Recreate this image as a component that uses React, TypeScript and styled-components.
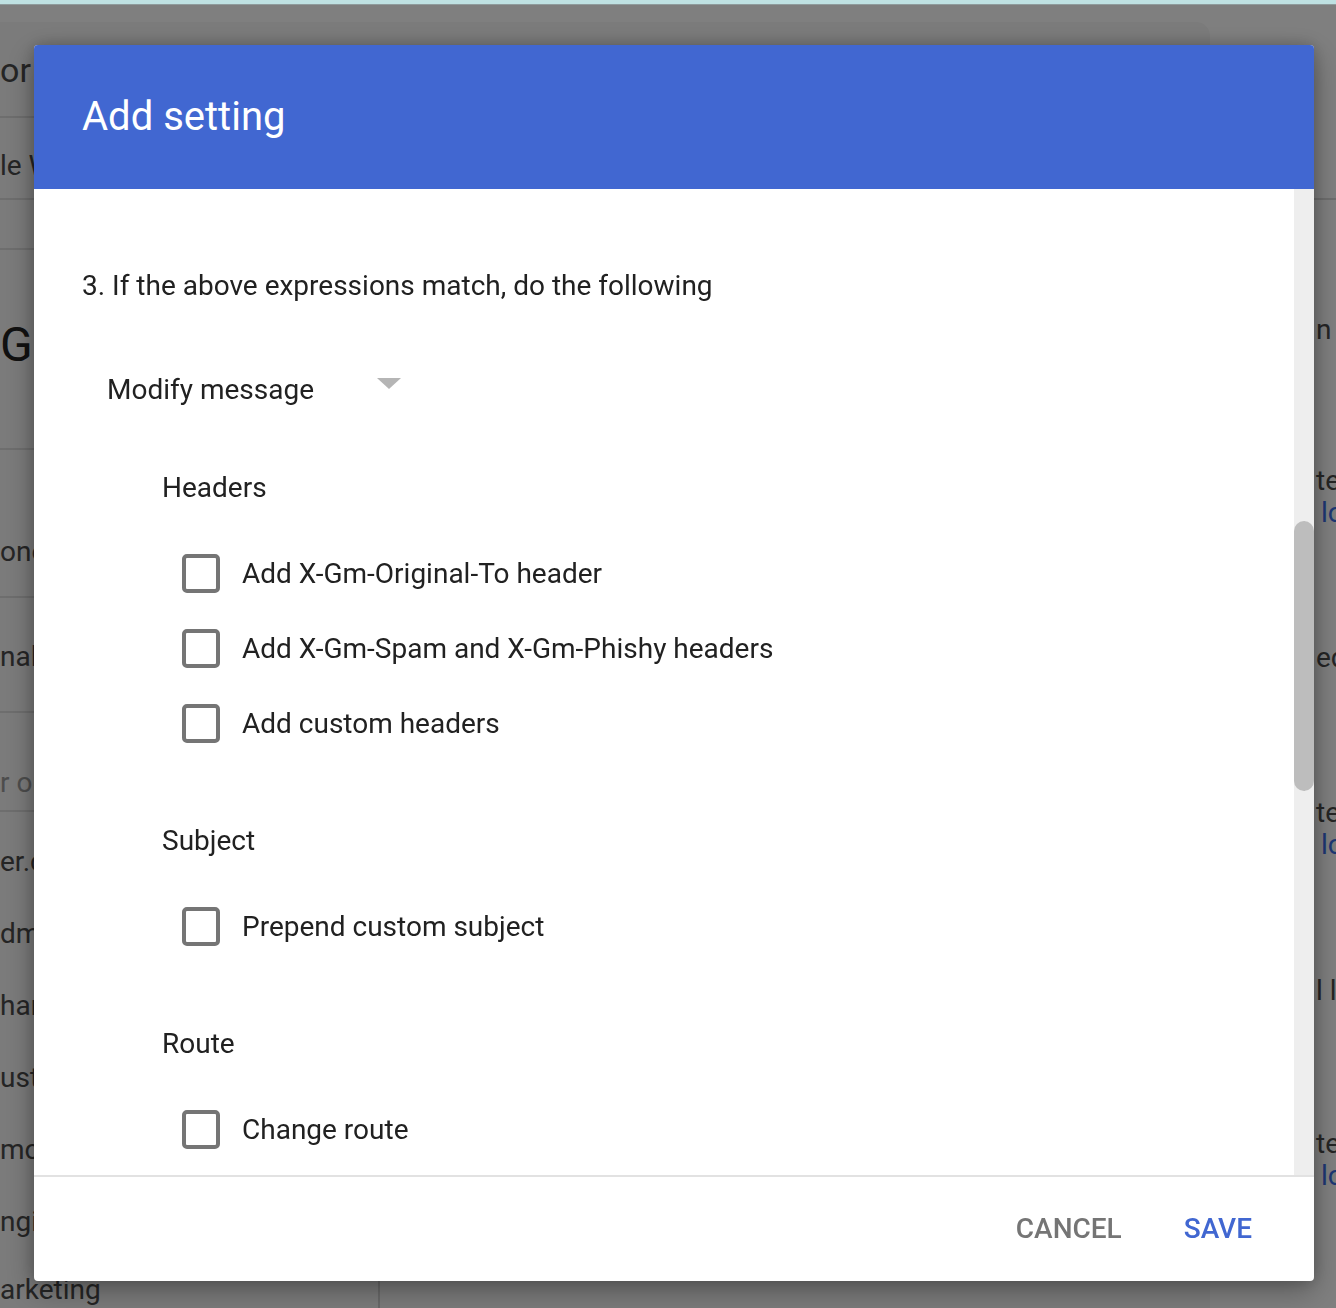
import React from "react";
import styled, { createGlobalStyle } from "styled-components";

const Global = createGlobalStyle`
  html, body { margin: 0; padding: 0; }
  body {
    width: 1336px;
    height: 1308px;
    overflow: hidden;
    background: #ffffff;
    font-family: Roboto, "Noto Sans", Arial, sans-serif;
  }
  * { box-sizing: border-box; }
`;

/* ---------- background page (dimmed by the overlay) ---------- */

const TopStrip = styled.div`
  height: 5px;
  background: #bfe1e2;
  border-bottom: 1px solid #8f9b9c;
`;

const Page = styled.div`
  display: flex;
  height: 1303px;
  overflow: hidden;
`;

const LeftCard = styled.div`
  width: 1210px;
  flex: none;
  margin-top: 17px;
  background: #f6f6f6;
  border-top-right-radius: 14px;
  display: flex;
`;

const ListColumn = styled.div`
  width: 380px;
  display: flex;
  flex-direction: column;
`;

const ListRow = styled.div<{ $h: number; $pad: number; $line?: boolean; $edge?: boolean }>`
  height: ${(p) => p.$h}px;
  flex: none;
  padding-top: ${(p) => p.$pad}px;
  border-bottom: ${(p) => (p.$line ? "2px solid #dcdcdc" : "none")};
  border-right: ${(p) => (p.$edge ? "2px solid #d2d2d2" : "none")};
  white-space: nowrap;
`;

const ListText = styled.div<{ $size?: number; $color?: string; $lh?: number }>`
  font-size: ${(p) => p.$size ?? 28}px;
  line-height: ${(p) => p.$lh ?? 40}px;
  color: ${(p) => p.$color ?? "#4a4a4a"};
`;

const RightColumn = styled.div`
  flex: 1;
  min-width: 0;
  padding-left: 106px;
  display: flex;
  flex-direction: column;
`;

const RightTop = styled.div`
  height: 195px;
  margin-left: -106px;
  border-bottom: 2px solid #dcdcdc;
`;

const RightItem = styled.div<{ $mt: number }>`
  margin-top: ${(p) => p.$mt}px;
  white-space: nowrap;
  font-size: 28px;
  line-height: 32px;
  color: #4a4a4a;
`;

const BlueLink = styled.div`
  color: #3b6ee8;
  padding-left: 5px;
`;

/* ---------- overlay + dialog ---------- */

const Overlay = styled.div`
  position: fixed;
  top: 5px;
  left: 0;
  right: 0;
  bottom: 0;
  background: rgba(0, 0, 0, 0.5);
`;

const Dialog = styled.div`
  position: absolute;
  left: 34px;
  top: 40px;
  width: 1280px;
  height: 1236px;
  background: #ffffff;
  border-radius: 4px;
  box-shadow: 0 10px 30px rgba(0, 0, 0, 0.3), 0 0 16px rgba(0, 0, 0, 0.2);
  display: flex;
  flex-direction: column;
  overflow: hidden;
`;

const Header = styled.div`
  height: 144px;
  flex: none;
  background: #4167d1;
  display: flex;
  align-items: center;
  padding-left: 48px;
`;

const Title = styled.h1`
  margin: 0;
  font-size: 40px;
  font-weight: 400;
  color: #ffffff;
  line-height: 48px;
`;

const Body = styled.div`
  flex: 1;
  display: flex;
  min-height: 0;
`;

const Content = styled.div`
  flex: 1;
  overflow: hidden;
  padding: 77px 0 0 48px;
  display: flex;
  flex-direction: column;
  color: #212121;
`;

const Intro = styled.p`
  margin: 0;
  font-size: 28px;
  line-height: 40px;
  color: #212121;
`;

const Select = styled.div`
  margin: 53px 0 0 25px;
  width: 294px;
  height: 60px;
  display: flex;
  align-items: center;
  justify-content: space-between;
  font-size: 28px;
  color: #212121;
`;

const Arrow = styled.span`
  width: 0;
  height: 0;
  border-left: 12px solid transparent;
  border-right: 12px solid transparent;
  border-top: 11px solid #b5b5b5;
  margin-bottom: 12px;
`;

const Sections = styled.div`
  margin: 49px 0 0 80px;
  display: flex;
  flex-direction: column;
  gap: 60px;
`;

const Section = styled.section`
  display: flex;
  flex-direction: column;
`;

const SectionTitle = styled.div`
  font-size: 28px;
  line-height: 40px;
  color: #212121;
`;

const Options = styled.div`
  margin-top: 28px;
  display: flex;
  flex-direction: column;
`;

const OptionRow = styled.label`
  height: 75px;
  display: flex;
  align-items: center;
  padding-left: 20px;
  gap: 22px;
  font-size: 28px;
  color: #212121;
`;

const CheckBox = styled.span`
  width: 38px;
  height: 39px;
  flex: none;
  border: 4px solid #757575;
  border-radius: 5px;
`;

const ScrollTrack = styled.div`
  width: 20px;
  flex: none;
  background: #eeeeee;
`;

const ScrollThumb = styled.div<{ $top: number; $h: number }>`
  margin-top: ${(p) => p.$top}px;
  height: ${(p) => p.$h}px;
  background: #bdbdbd;
  border-radius: 10px;
`;

const Footer = styled.div`
  height: 106px;
  flex: none;
  border-top: 2px solid #e2e2e2;
  display: flex;
  align-items: center;
  justify-content: flex-end;
  padding-right: 46px;
  gap: 30px;
`;

const TextButton = styled.button<{ $primary?: boolean }>`
  background: none;
  border: none;
  padding: 0 16px;
  font-family: Roboto, "Noto Sans", Arial, sans-serif;
  font-size: 28px;
  font-weight: 500;
  line-height: 40px;
  color: ${(p) => (p.$primary ? "#4167d1" : "#757575")};
  cursor: pointer;
`;

const listRows: {
  h: number;
  pad: number;
  line?: boolean;
  edge?: boolean;
  text: string;
  size?: number;
  color?: string;
  lh?: number;
}[] = [
  { h: 96, pad: 28, line: true, text: "or", size: 34 },
  { h: 82, pad: 28, line: true, text: "le Workspace", size: 28 },
  { h: 50, pad: 0, line: true, text: "" },
  { h: 200, pad: 65, line: true, text: "Gmail", size: 48, color: "#222222", lh: 60 },
  { h: 148, pad: 82, line: true, text: "one" },
  { h: 115, pad: 39, line: true, text: "nal" },
  { h: 99, pad: 50, line: true, text: "r org", color: "#9a9a9a" },
  { h: 86, pad: 30, edge: true, text: "er.com" },
  { h: 72, pad: 16, edge: true, text: "dmin" },
  { h: 72, pad: 16, edge: true, text: "hara" },
  { h: 72, pad: 16, edge: true, text: "ust" },
  { h: 72, pad: 16, edge: true, text: "moji" },
  { h: 72, pad: 16, edge: true, text: "ngineering" },
  { h: 72, pad: 12, edge: true, text: "arketing" },
];

const headerOptions = [
  "Add X-Gm-Original-To header",
  "Add X-Gm-Spam and X-Gm-Phishy headers",
  "Add custom headers",
];

export default function App() {
  return (
    <>
      <Global />
      <TopStrip />
      <Page>
        <LeftCard>
          <ListColumn>
            {listRows.map((r, i) => (
              <ListRow key={i} $h={r.h} $pad={r.pad} $line={r.line} $edge={r.edge}>
                <ListText $size={r.size} $color={r.color} $lh={r.lh}>
                  {r.text}
                </ListText>
              </ListRow>
            ))}
          </ListColumn>
        </LeftCard>
        <RightColumn>
          <RightTop />
          <RightItem $mt={114}>n</RightItem>
          <RightItem $mt={119}>
            <div>te</div>
            <BlueLink>lo</BlueLink>
          </RightItem>
          <RightItem $mt={113}>ed</RightItem>
          <RightItem $mt={123}>
            <div>te</div>
            <BlueLink>lo</BlueLink>
          </RightItem>
          <RightItem $mt={114}>l li</RightItem>
          <RightItem $mt={121}>
            <div>te</div>
            <BlueLink>lo</BlueLink>
          </RightItem>
        </RightColumn>
      </Page>

      <Overlay>
        <Dialog role="dialog" aria-label="Add setting">
          <Header>
            <Title>Add setting</Title>
          </Header>
          <Body>
            <Content>
              <Intro>3. If the above expressions match, do the following</Intro>
              <Select>
                <span>Modify message</span>
                <Arrow />
              </Select>
              <Sections>
                <Section>
                  <SectionTitle>Headers</SectionTitle>
                  <Options>
                    {headerOptions.map((o) => (
                      <OptionRow key={o}>
                        <CheckBox />
                        {o}
                      </OptionRow>
                    ))}
                  </Options>
                </Section>
                <Section>
                  <SectionTitle>Subject</SectionTitle>
                  <Options>
                    <OptionRow>
                      <CheckBox />
                      Prepend custom subject
                    </OptionRow>
                  </Options>
                </Section>
                <Section>
                  <SectionTitle>Route</SectionTitle>
                  <Options>
                    <OptionRow>
                      <CheckBox />
                      Change route
                    </OptionRow>
                  </Options>
                </Section>
              </Sections>
            </Content>
            <ScrollTrack>
              <ScrollThumb $top={332} $h={270} />
            </ScrollTrack>
          </Body>
          <Footer>
            <TextButton>CANCEL</TextButton>
            <TextButton $primary>SAVE</TextButton>
          </Footer>
        </Dialog>
      </Overlay>
    </>
  );
}
